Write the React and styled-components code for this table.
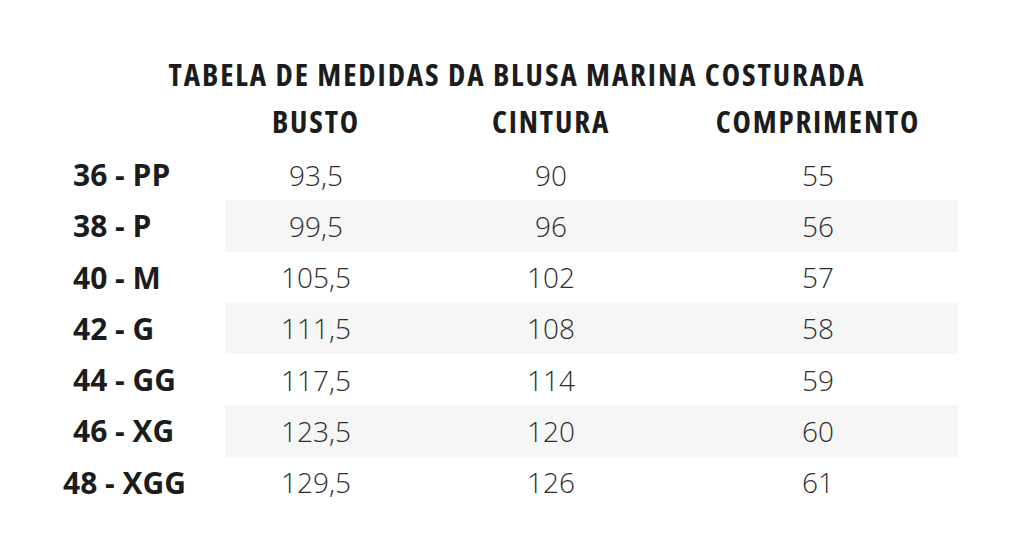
import styled, { createGlobalStyle } from 'styled-components';

const GlobalStyle = createGlobalStyle`
    html, body {
        margin: 0;
        padding: 0;
        background: #ffffff;
    }
    body {
        font-family: 'Open Sans', 'Liberation Sans', sans-serif;
    }
`;

const PageStyled = styled.div`
    width: 1024px;
    height: 552px;
    padding-top: 55px;
    box-sizing: border-box;
    overflow: hidden;
`;

const TitleStyled = styled.h1`
    margin: 0;
    height: 38px;
    line-height: 38px;
    text-align: center;
    font-size: 31px;
    font-weight: 700;
    font-stretch: 75%;
    letter-spacing: 1.9px;
    color: #1c1c1c;
    padding-left: 10px;
`;

const RowStyled = styled.div`
    display: flex;
    align-items: stretch;
    height: ${(p) => p.$height || 51.25}px;
`;

const LabelStyled = styled.div`
    width: 225px;
    box-sizing: border-box;
    padding-left: ${(p) => 73 + (p.$shift || 0)}px;
    display: flex;
    align-items: center;
    font-size: 30px;
    font-weight: 700;
    color: #1c1c1c;
    white-space: pre;
`;

const CellsStyled = styled.div`
    display: grid;
    grid-template-columns: 182px 288px 246px;
    width: 733px;
    background: ${(p) => (p.$striped ? '#f6f6f6' : 'transparent')};
`;

const HeaderCellStyled = styled.div`
    display: flex;
    align-items: center;
    justify-content: center;
    font-size: 31px;
    font-weight: 700;
    font-stretch: 75%;
    letter-spacing: 1.8px;
    color: #1c1c1c;
`;

const ValueCellStyled = styled.div`
    display: flex;
    align-items: center;
    justify-content: center;
    font-size: 28px;
    font-weight: 300;
    color: #2e2e2e;
`;

const sizes = [
    { label: '36 - PP', busto: '93,5', cintura: '90', comprimento: '55' },
    { label: '38 - P', busto: '99,5', cintura: '96', comprimento: '56' },
    { label: '40 - M', busto: '105,5', cintura: '102', comprimento: '57' },
    { label: '42 - G', busto: '111,5', cintura: '108', comprimento: '58' },
    { label: '44 - GG', busto: '117,5', cintura: '114', comprimento: '59' },
    { label: '46 - XG', busto: '123,5', cintura: '120', comprimento: '60' },
    { label: '48 - XGG', busto: '129,5', cintura: '126', comprimento: '61', shift: -10 },
];

function App() {
    return (
        <>
            <GlobalStyle />
            <PageStyled>
                <TitleStyled>TABELA DE MEDIDAS DA BLUSA MARINA COSTURADA</TitleStyled>
                <RowStyled $height={56}>
                    <LabelStyled />
                    <CellsStyled>
                        <HeaderCellStyled>BUSTO</HeaderCellStyled>
                        <HeaderCellStyled>CINTURA</HeaderCellStyled>
                        <HeaderCellStyled>COMPRIMENTO</HeaderCellStyled>
                    </CellsStyled>
                </RowStyled>
                {sizes.map((size, index) => (
                    <RowStyled key={size.label}>
                        <LabelStyled $shift={size.shift}>{size.label}</LabelStyled>
                        <CellsStyled $striped={index % 2 === 1}>
                            <ValueCellStyled>{size.busto}</ValueCellStyled>
                            <ValueCellStyled>{size.cintura}</ValueCellStyled>
                            <ValueCellStyled>{size.comprimento}</ValueCellStyled>
                        </CellsStyled>
                    </RowStyled>
                ))}
            </PageStyled>
        </>
    );
}

export default App;
